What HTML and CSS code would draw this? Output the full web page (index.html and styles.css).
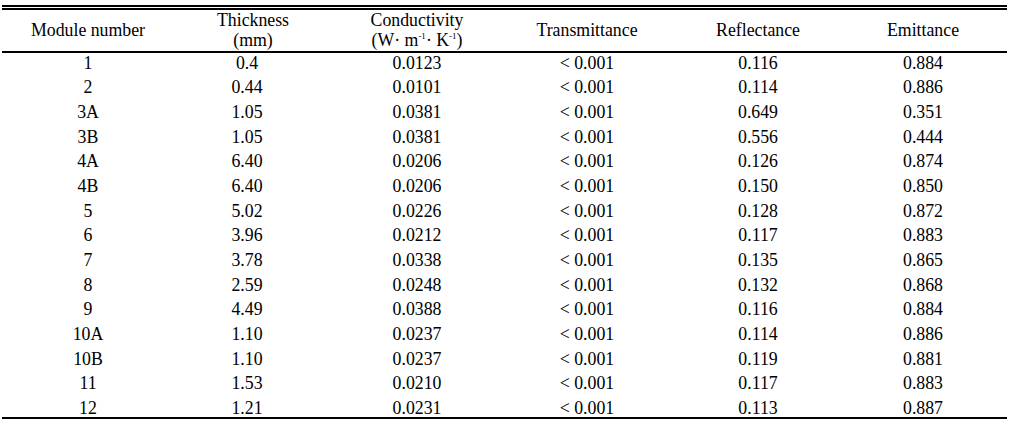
FILE: index.html
```html
<!DOCTYPE html>
<html lang="en">
<head>
<meta charset="utf-8">
<title>Module properties</title>
<link rel="stylesheet" href="styles.css">
</head>
<body>
<table class="data">
  <colgroup>
    <col class="c1"><col class="c2"><col class="c3"><col class="c4"><col class="c5"><col class="c6">
  </colgroup>
  <thead>
    <tr>
      <th class="one">Module number</th>
      <th>Thickness<br>(mm)</th>
      <th>Conductivity<br>(W· m<sup>-1</sup>· K<sup>-1</sup>)</th>
      <th class="one">Transmittance</th>
      <th class="one">Reflectance</th>
      <th class="one last">Emittance</th>
    </tr>
  </thead>
  <tbody>
    <tr><td>1</td><td class="thick">0.4</td><td>0.0123</td><td>&lt; 0.001</td><td>0.116</td><td class="last">0.884</td></tr>
    <tr><td>2</td><td class="thick">0.44</td><td>0.0101</td><td>&lt; 0.001</td><td>0.114</td><td class="last">0.886</td></tr>
    <tr><td>3A</td><td class="thick">1.05</td><td>0.0381</td><td>&lt; 0.001</td><td>0.649</td><td class="last">0.351</td></tr>
    <tr><td>3B</td><td class="thick">1.05</td><td>0.0381</td><td>&lt; 0.001</td><td>0.556</td><td class="last">0.444</td></tr>
    <tr><td>4A</td><td class="thick">6.40</td><td>0.0206</td><td>&lt; 0.001</td><td>0.126</td><td class="last">0.874</td></tr>
    <tr><td>4B</td><td class="thick">6.40</td><td>0.0206</td><td>&lt; 0.001</td><td>0.150</td><td class="last">0.850</td></tr>
    <tr><td>5</td><td class="thick">5.02</td><td>0.0226</td><td>&lt; 0.001</td><td>0.128</td><td class="last">0.872</td></tr>
    <tr><td>6</td><td class="thick">3.96</td><td>0.0212</td><td>&lt; 0.001</td><td>0.117</td><td class="last">0.883</td></tr>
    <tr><td>7</td><td class="thick">3.78</td><td>0.0338</td><td>&lt; 0.001</td><td>0.135</td><td class="last">0.865</td></tr>
    <tr><td>8</td><td class="thick">2.59</td><td>0.0248</td><td>&lt; 0.001</td><td>0.132</td><td class="last">0.868</td></tr>
    <tr><td>9</td><td class="thick">4.49</td><td>0.0388</td><td>&lt; 0.001</td><td>0.116</td><td class="last">0.884</td></tr>
    <tr><td>10A</td><td class="thick">1.10</td><td>0.0237</td><td>&lt; 0.001</td><td>0.114</td><td class="last">0.886</td></tr>
    <tr><td>10B</td><td class="thick">1.10</td><td>0.0237</td><td>&lt; 0.001</td><td>0.119</td><td class="last">0.881</td></tr>
    <tr><td>11</td><td class="thick">1.53</td><td>0.0210</td><td>&lt; 0.001</td><td>0.117</td><td class="last">0.883</td></tr>
    <tr class="end"><td>12</td><td class="thick">1.21</td><td>0.0231</td><td>&lt; 0.001</td><td>0.113</td><td class="last">0.887</td></tr>
  </tbody>
</table>
</body>
</html>
```
FILE: styles.css
```css
html, body {
  margin: 0;
  background: #ffffff;
}
body {
  padding: 5px 0 0 2px;
  font-family: "Liberation Serif", "Times New Roman", serif;
  font-size: 17.8px;
  color: #000000;
}
.data {
  width: 1005px;
  table-layout: fixed;
  border-collapse: separate;
  border-spacing: 0;
  border-top: 5px double #000000;
  border-bottom: 2px solid #000000;
}
.c1 { width: 172px; }
.c2 { width: 158px; }
.c3 { width: 170px; }
.c4 { width: 170px; }
.c5 { width: 172px; }
.c6 { width: 163px; }

.data th {
  font-weight: normal;
  text-align: center;
  vertical-align: top;
  line-height: 20px;
  height: 41px;
  padding: 0;
  border-bottom: 2px solid #000000;
}
.data th.one {
  vertical-align: middle;
  height: 39px;
  padding-bottom: 2px;
}
.data th.last,
.data td.last {
  padding-right: 5px;
}
.data sup {
  font-size: 9px;
  line-height: 0;
  vertical-align: 7px;
}
.data td {
  text-align: center;
  vertical-align: top;
  line-height: 18px;
  padding: 0.5px 0 6.2px 0;
}
.data td.thick {
  padding-right: 12px;
}
.data tr.end td {
  padding-bottom: 0;
}
```
